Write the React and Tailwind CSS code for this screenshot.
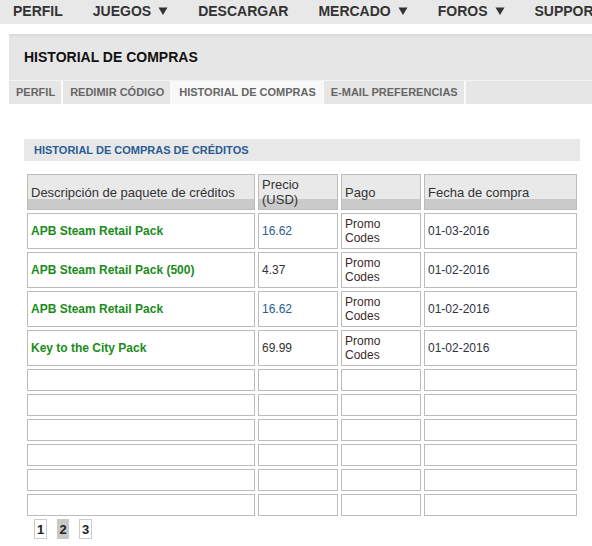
const navItems = [
  { label: "PERFIL" },
  { label: "JUEGOS", menu: true },
  { label: "DESCARGAR" },
  { label: "MERCADO", menu: true },
  { label: "FOROS", menu: true },
  { label: "SUPPORT" },
];

const tabs = [
  { label: "PERFIL" },
  { label: "REDIMIR CÓDIGO" },
  { label: "HISTORIAL DE COMPRAS", active: true },
  { label: "E-MAIL PREFERENCIAS" },
];

const rows = [
  { name: "APB Steam Retail Pack", price: "16.62", blue: true, pay: "Promo Codes", date: "01-03-2016" },
  { name: "APB Steam Retail Pack (500)", price: "4.37", pay: "Promo Codes", date: "01-02-2016" },
  { name: "APB Steam Retail Pack", price: "16.62", blue: true, pay: "Promo Codes", date: "01-02-2016" },
  { name: "Key to the City Pack", price: "69.99", pay: "Promo Codes", date: "01-02-2016" },
];

const Caret = () => (
  <svg width="10" height="8" viewBox="0 0 10 8" className="ml-[7px] inline-block">
    <path d="M0.5 0.5h9L5 8z" fill="#333" />
  </svg>
);

const cell = "border border-[#bcbcbc] bg-white px-[3px] flex items-center";
const head =
  "border border-[#bcbcbc] px-[3px] flex items-center bg-[linear-gradient(to_bottom,#e9e9e9_0,#e9e9e9_70%,#cacaca_70%,#cacaca_100%)] text-[#333] text-[13px] leading-[15px]";

export default function App() {
  return (
    <div className="w-[592px] h-[546px] overflow-hidden bg-white font-['Liberation_Sans',Arial,sans-serif]">
      {/* top nav */}
      <nav className="h-[24px] bg-[#e8e8e8] flex items-center pl-[13px] gap-[30px] whitespace-nowrap">
        {navItems.map((n) => (
          <span key={n.label} className="flex items-center text-[14px] font-bold text-[#333] leading-none -mt-[2px]">
            {n.label}
            {n.menu && <Caret />}
          </span>
        ))}
      </nav>

      {/* page heading panel */}
      <div className="mt-[10px] ml-[9px] bg-[#e6e6e6] shadow-[inset_0_3px_3px_-1px_rgba(0,0,0,0.06)]">
        <div className="h-[46px] flex items-center pl-[15px]">
          <h1 className="text-[14px] font-bold text-[#111] leading-none">HISTORIAL DE COMPRAS</h1>
        </div>
        <div className="flex h-[24px] border-t border-[#f4f4f4]">
          {tabs.map((t) => (
            <div
              key={t.label}
              className={`flex items-center pl-[7px] pr-[6px] border-r-2 border-[#fafafa] text-[11px] font-bold text-[#666] ${
                t.active ? "bg-[#f8f8f8]" : ""
              }`}
            >
              {t.label}
            </div>
          ))}
        </div>
      </div>

      {/* content */}
      <div className="mt-[35px] ml-[24px] w-[556px]">
        <div className="h-[22px] bg-[#e8e8e8] flex items-center pl-[10px] text-[11px] font-bold text-[#2b5c94]">
          HISTORIAL DE COMPRAS DE CRÉDITOS
        </div>

        <div className="mt-[10px] p-[3px] grid grid-cols-[228px_80px_80px_153px] gap-[3px] text-[12px] leading-[14px]">
          <div className={`${head} h-[36px]`}>Descripción de paquete de créditos</div>
          <div className={`${head} h-[36px]`}>
            Precio
            <br />
            (USD)
          </div>
          <div className={`${head} h-[36px]`}>Pago</div>
          <div className={`${head} h-[36px]`}>Fecha de compra</div>

          {rows.map((r, i) => (
            <div key={i} className="contents">
              <div className={`${cell} h-[36px] font-bold text-[#1a8c1a]`}>{r.name}</div>
              <div className={`${cell} h-[36px] ${r.blue ? "text-[#2a5a92]" : "text-[#333]"}`}>{r.price}</div>
              <div className={`${cell} h-[36px] text-[#3a2a2a]`}>
                <span className="w-[40px]">{r.pay}</span>
              </div>
              <div className={`${cell} h-[36px] text-[#2e3440]`}>{r.date}</div>
            </div>
          ))}

          {Array.from({ length: 6 }).map((_, i) => (
            <div key={i} className="contents">
              <div className={`${cell} h-[22px]`} />
              <div className={`${cell} h-[22px]`} />
              <div className={`${cell} h-[22px]`} />
              <div className={`${cell} h-[22px]`} />
            </div>
          ))}
        </div>

        <div className="flex gap-[10px] ml-[10px] text-[13px] font-bold text-[#222] leading-none">
          <span className="h-[20px] w-[13px] flex items-center justify-center border border-[#ccc]">1</span>
          <span className="h-[20px] w-[12px] flex items-center justify-center bg-[#c8c8c8]">2</span>
          <span className="h-[20px] w-[13px] flex items-center justify-center border border-[#ccc]">3</span>
        </div>
      </div>
    </div>
  );
}
